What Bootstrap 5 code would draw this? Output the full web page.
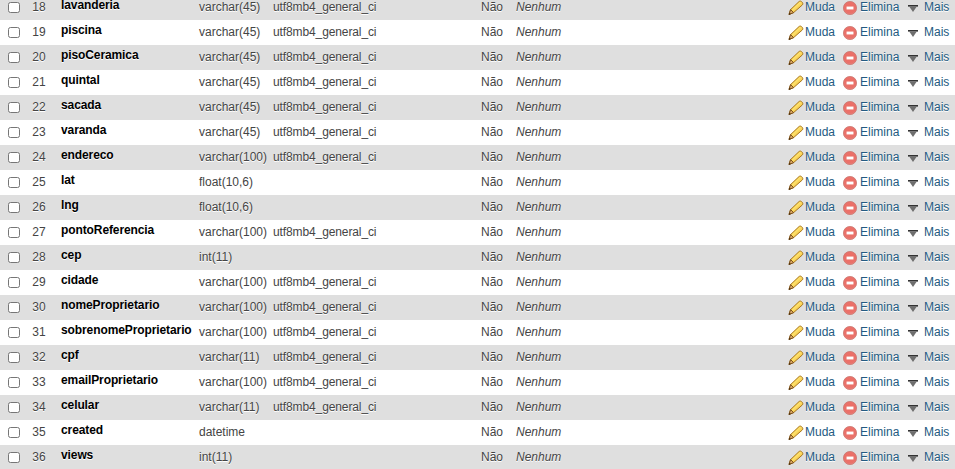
<!DOCTYPE html>
<html lang="pt">
<head>
<meta charset="utf-8">
<title>Estrutura</title>
<link rel="stylesheet" href="https://cdn.jsdelivr.net/npm/bootstrap@5.3.0/dist/css/bootstrap.min.css">
<style>
html,body{overflow:hidden;background:#fff}
body{font-family:"Liberation Sans",Arial,sans-serif;font-size:12px;color:#444;height:469px}
.struct-wrap{margin-top:-5px}
.struct-table{table-layout:fixed;width:955px;margin:0;border-collapse:collapse;--bs-table-color:#444;--bs-table-bg:transparent;color:#444}
.struct-table td{height:25px;padding:0;border:0;vertical-align:middle;white-space:nowrap;line-height:15px;text-shadow:0 1px 0 #fff}
.struct-table tr:nth-child(odd) td{background:#dfdfdf}
.struct-table tr:nth-child(even) td{background:#fff}
.struct-table tr>td.c-check{padding-left:8px}
.row-box{display:block;width:11.5px;height:11.5px;margin:0;border:1.5px solid #767676;border-radius:2.5px;background:#fff;appearance:none}
.c-num{text-align:center;padding-right:1px!important}
.c-name{padding-left:9px!important;font-weight:700;color:#000;letter-spacing:-.1px}
.c-name span{position:relative;top:-2px;display:block}
.struct-table td.c-name{color:#000}
.c-coll{letter-spacing:-.11px}
.c-def{font-style:italic}
.act{display:flex;align-items:center;color:#235a81;text-decoration:none}
.act svg{flex:none;display:block}
.act-change svg{margin:1px 1px 0 0}
.act-drop svg{margin:1px 3px 0 0}
.act-more svg{margin:1px 6px 0 0}
</style>
</head>
<body>
<svg width="0" height="0" class="d-block position-absolute">
<defs>
<linearGradient id="penBody" x1="0" y1="0" x2="1" y2="1"><stop offset="0" stop-color="#eda91f"/><stop offset=".45" stop-color="#ffe26a"/><stop offset="1" stop-color="#dd9212"/></linearGradient>
<radialGradient id="dropFill" cx=".5" cy=".45" r=".6"><stop offset="0" stop-color="#ee6f64"/><stop offset=".75" stop-color="#e9716a"/><stop offset="1" stop-color="#f0a098"/></radialGradient>
<symbol id="ic-pen" viewBox="0 0 16 16">
<path d="M11 1.6C11.8.9 12.8.9 13.6 1.7L14.3 2.4C15 3.2 15 4.2 14.3 5L5.6 12.6 1 14.5 2.6 9.6Z" fill="url(#penBody)" stroke="#a8761c" stroke-width="1" stroke-linejoin="round"/>
<path d="M2.6 9.6 5.6 12.6 1 14.5Z" fill="#d9a868" stroke="#744714" stroke-width=".9" stroke-linejoin="round"/>
<path d="M.8 14.7 1.5 12.7 2.8 14Z" fill="#3d2710"/>
</symbol>
<symbol id="ic-drop" viewBox="0.7 0.7 14.6 14.6">
<circle cx="8" cy="8" r="6.9" fill="url(#dropFill)" stroke="#c8736b" stroke-width=".8"/>
<rect x="4.4" y="6.5" width="7.2" height="3" fill="#fff"/>
</symbol>
<symbol id="ic-more" viewBox="0 0 10 7">
<rect x="0" y="0" width="10" height="1.6" fill="#333"/>
<path d="M1.2 1.6H8.8L5 7Z" fill="#6e6e6e"/>
</symbol>
</defs>
</svg>
<div class="struct-wrap">
<table class="table struct-table">
<colgroup><col style="width:27px"><col style="width:25px"><col style="width:147px"><col style="width:74px"><col style="width:208px"><col style="width:35px"><col style="width:272px"><col style="width:55px"><col style="width:65px"><col style="width:47px"></colgroup>
<tbody id="rows">
<tr><td class="c-check"><input class="row-box" type="checkbox"></td><td class="c-num">18</td><td class="c-name"><span>lavanderia</span></td><td>varchar(45)</td><td class="c-coll">utf8mb4_general_ci</td><td>Não</td><td class="c-def">Nenhum</td><td><a class="act act-change" href="#"><svg width="16" height="16"><use href="#ic-pen"/></svg>Muda</a></td><td><a class="act act-drop" href="#"><svg width="14" height="14"><use href="#ic-drop"/></svg>Elimina</a></td><td><a class="act act-more" href="#"><svg width="10" height="7"><use href="#ic-more"/></svg>Mais</a></td></tr>
<tr><td class="c-check"><input class="row-box" type="checkbox"></td><td class="c-num">19</td><td class="c-name"><span>piscina</span></td><td>varchar(45)</td><td class="c-coll">utf8mb4_general_ci</td><td>Não</td><td class="c-def">Nenhum</td><td><a class="act act-change" href="#"><svg width="16" height="16"><use href="#ic-pen"/></svg>Muda</a></td><td><a class="act act-drop" href="#"><svg width="14" height="14"><use href="#ic-drop"/></svg>Elimina</a></td><td><a class="act act-more" href="#"><svg width="10" height="7"><use href="#ic-more"/></svg>Mais</a></td></tr>
<tr><td class="c-check"><input class="row-box" type="checkbox"></td><td class="c-num">20</td><td class="c-name"><span>pisoCeramica</span></td><td>varchar(45)</td><td class="c-coll">utf8mb4_general_ci</td><td>Não</td><td class="c-def">Nenhum</td><td><a class="act act-change" href="#"><svg width="16" height="16"><use href="#ic-pen"/></svg>Muda</a></td><td><a class="act act-drop" href="#"><svg width="14" height="14"><use href="#ic-drop"/></svg>Elimina</a></td><td><a class="act act-more" href="#"><svg width="10" height="7"><use href="#ic-more"/></svg>Mais</a></td></tr>
<tr><td class="c-check"><input class="row-box" type="checkbox"></td><td class="c-num">21</td><td class="c-name"><span>quintal</span></td><td>varchar(45)</td><td class="c-coll">utf8mb4_general_ci</td><td>Não</td><td class="c-def">Nenhum</td><td><a class="act act-change" href="#"><svg width="16" height="16"><use href="#ic-pen"/></svg>Muda</a></td><td><a class="act act-drop" href="#"><svg width="14" height="14"><use href="#ic-drop"/></svg>Elimina</a></td><td><a class="act act-more" href="#"><svg width="10" height="7"><use href="#ic-more"/></svg>Mais</a></td></tr>
<tr><td class="c-check"><input class="row-box" type="checkbox"></td><td class="c-num">22</td><td class="c-name"><span>sacada</span></td><td>varchar(45)</td><td class="c-coll">utf8mb4_general_ci</td><td>Não</td><td class="c-def">Nenhum</td><td><a class="act act-change" href="#"><svg width="16" height="16"><use href="#ic-pen"/></svg>Muda</a></td><td><a class="act act-drop" href="#"><svg width="14" height="14"><use href="#ic-drop"/></svg>Elimina</a></td><td><a class="act act-more" href="#"><svg width="10" height="7"><use href="#ic-more"/></svg>Mais</a></td></tr>
<tr><td class="c-check"><input class="row-box" type="checkbox"></td><td class="c-num">23</td><td class="c-name"><span>varanda</span></td><td>varchar(45)</td><td class="c-coll">utf8mb4_general_ci</td><td>Não</td><td class="c-def">Nenhum</td><td><a class="act act-change" href="#"><svg width="16" height="16"><use href="#ic-pen"/></svg>Muda</a></td><td><a class="act act-drop" href="#"><svg width="14" height="14"><use href="#ic-drop"/></svg>Elimina</a></td><td><a class="act act-more" href="#"><svg width="10" height="7"><use href="#ic-more"/></svg>Mais</a></td></tr>
<tr><td class="c-check"><input class="row-box" type="checkbox"></td><td class="c-num">24</td><td class="c-name"><span>endereco</span></td><td>varchar(100)</td><td class="c-coll">utf8mb4_general_ci</td><td>Não</td><td class="c-def">Nenhum</td><td><a class="act act-change" href="#"><svg width="16" height="16"><use href="#ic-pen"/></svg>Muda</a></td><td><a class="act act-drop" href="#"><svg width="14" height="14"><use href="#ic-drop"/></svg>Elimina</a></td><td><a class="act act-more" href="#"><svg width="10" height="7"><use href="#ic-more"/></svg>Mais</a></td></tr>
<tr><td class="c-check"><input class="row-box" type="checkbox"></td><td class="c-num">25</td><td class="c-name"><span>lat</span></td><td>float(10,6)</td><td class="c-coll"></td><td>Não</td><td class="c-def">Nenhum</td><td><a class="act act-change" href="#"><svg width="16" height="16"><use href="#ic-pen"/></svg>Muda</a></td><td><a class="act act-drop" href="#"><svg width="14" height="14"><use href="#ic-drop"/></svg>Elimina</a></td><td><a class="act act-more" href="#"><svg width="10" height="7"><use href="#ic-more"/></svg>Mais</a></td></tr>
<tr><td class="c-check"><input class="row-box" type="checkbox"></td><td class="c-num">26</td><td class="c-name"><span>lng</span></td><td>float(10,6)</td><td class="c-coll"></td><td>Não</td><td class="c-def">Nenhum</td><td><a class="act act-change" href="#"><svg width="16" height="16"><use href="#ic-pen"/></svg>Muda</a></td><td><a class="act act-drop" href="#"><svg width="14" height="14"><use href="#ic-drop"/></svg>Elimina</a></td><td><a class="act act-more" href="#"><svg width="10" height="7"><use href="#ic-more"/></svg>Mais</a></td></tr>
<tr><td class="c-check"><input class="row-box" type="checkbox"></td><td class="c-num">27</td><td class="c-name"><span>pontoReferencia</span></td><td>varchar(100)</td><td class="c-coll">utf8mb4_general_ci</td><td>Não</td><td class="c-def">Nenhum</td><td><a class="act act-change" href="#"><svg width="16" height="16"><use href="#ic-pen"/></svg>Muda</a></td><td><a class="act act-drop" href="#"><svg width="14" height="14"><use href="#ic-drop"/></svg>Elimina</a></td><td><a class="act act-more" href="#"><svg width="10" height="7"><use href="#ic-more"/></svg>Mais</a></td></tr>
<tr><td class="c-check"><input class="row-box" type="checkbox"></td><td class="c-num">28</td><td class="c-name"><span>cep</span></td><td>int(11)</td><td class="c-coll"></td><td>Não</td><td class="c-def">Nenhum</td><td><a class="act act-change" href="#"><svg width="16" height="16"><use href="#ic-pen"/></svg>Muda</a></td><td><a class="act act-drop" href="#"><svg width="14" height="14"><use href="#ic-drop"/></svg>Elimina</a></td><td><a class="act act-more" href="#"><svg width="10" height="7"><use href="#ic-more"/></svg>Mais</a></td></tr>
<tr><td class="c-check"><input class="row-box" type="checkbox"></td><td class="c-num">29</td><td class="c-name"><span>cidade</span></td><td>varchar(100)</td><td class="c-coll">utf8mb4_general_ci</td><td>Não</td><td class="c-def">Nenhum</td><td><a class="act act-change" href="#"><svg width="16" height="16"><use href="#ic-pen"/></svg>Muda</a></td><td><a class="act act-drop" href="#"><svg width="14" height="14"><use href="#ic-drop"/></svg>Elimina</a></td><td><a class="act act-more" href="#"><svg width="10" height="7"><use href="#ic-more"/></svg>Mais</a></td></tr>
<tr><td class="c-check"><input class="row-box" type="checkbox"></td><td class="c-num">30</td><td class="c-name"><span>nomeProprietario</span></td><td>varchar(100)</td><td class="c-coll">utf8mb4_general_ci</td><td>Não</td><td class="c-def">Nenhum</td><td><a class="act act-change" href="#"><svg width="16" height="16"><use href="#ic-pen"/></svg>Muda</a></td><td><a class="act act-drop" href="#"><svg width="14" height="14"><use href="#ic-drop"/></svg>Elimina</a></td><td><a class="act act-more" href="#"><svg width="10" height="7"><use href="#ic-more"/></svg>Mais</a></td></tr>
<tr><td class="c-check"><input class="row-box" type="checkbox"></td><td class="c-num">31</td><td class="c-name"><span>sobrenomeProprietario</span></td><td>varchar(100)</td><td class="c-coll">utf8mb4_general_ci</td><td>Não</td><td class="c-def">Nenhum</td><td><a class="act act-change" href="#"><svg width="16" height="16"><use href="#ic-pen"/></svg>Muda</a></td><td><a class="act act-drop" href="#"><svg width="14" height="14"><use href="#ic-drop"/></svg>Elimina</a></td><td><a class="act act-more" href="#"><svg width="10" height="7"><use href="#ic-more"/></svg>Mais</a></td></tr>
<tr><td class="c-check"><input class="row-box" type="checkbox"></td><td class="c-num">32</td><td class="c-name"><span>cpf</span></td><td>varchar(11)</td><td class="c-coll">utf8mb4_general_ci</td><td>Não</td><td class="c-def">Nenhum</td><td><a class="act act-change" href="#"><svg width="16" height="16"><use href="#ic-pen"/></svg>Muda</a></td><td><a class="act act-drop" href="#"><svg width="14" height="14"><use href="#ic-drop"/></svg>Elimina</a></td><td><a class="act act-more" href="#"><svg width="10" height="7"><use href="#ic-more"/></svg>Mais</a></td></tr>
<tr><td class="c-check"><input class="row-box" type="checkbox"></td><td class="c-num">33</td><td class="c-name"><span>emailProprietario</span></td><td>varchar(100)</td><td class="c-coll">utf8mb4_general_ci</td><td>Não</td><td class="c-def">Nenhum</td><td><a class="act act-change" href="#"><svg width="16" height="16"><use href="#ic-pen"/></svg>Muda</a></td><td><a class="act act-drop" href="#"><svg width="14" height="14"><use href="#ic-drop"/></svg>Elimina</a></td><td><a class="act act-more" href="#"><svg width="10" height="7"><use href="#ic-more"/></svg>Mais</a></td></tr>
<tr><td class="c-check"><input class="row-box" type="checkbox"></td><td class="c-num">34</td><td class="c-name"><span>celular</span></td><td>varchar(11)</td><td class="c-coll">utf8mb4_general_ci</td><td>Não</td><td class="c-def">Nenhum</td><td><a class="act act-change" href="#"><svg width="16" height="16"><use href="#ic-pen"/></svg>Muda</a></td><td><a class="act act-drop" href="#"><svg width="14" height="14"><use href="#ic-drop"/></svg>Elimina</a></td><td><a class="act act-more" href="#"><svg width="10" height="7"><use href="#ic-more"/></svg>Mais</a></td></tr>
<tr><td class="c-check"><input class="row-box" type="checkbox"></td><td class="c-num">35</td><td class="c-name"><span>created</span></td><td>datetime</td><td class="c-coll"></td><td>Não</td><td class="c-def">Nenhum</td><td><a class="act act-change" href="#"><svg width="16" height="16"><use href="#ic-pen"/></svg>Muda</a></td><td><a class="act act-drop" href="#"><svg width="14" height="14"><use href="#ic-drop"/></svg>Elimina</a></td><td><a class="act act-more" href="#"><svg width="10" height="7"><use href="#ic-more"/></svg>Mais</a></td></tr>
<tr><td class="c-check"><input class="row-box" type="checkbox"></td><td class="c-num">36</td><td class="c-name"><span>views</span></td><td>int(11)</td><td class="c-coll"></td><td>Não</td><td class="c-def">Nenhum</td><td><a class="act act-change" href="#"><svg width="16" height="16"><use href="#ic-pen"/></svg>Muda</a></td><td><a class="act act-drop" href="#"><svg width="14" height="14"><use href="#ic-drop"/></svg>Elimina</a></td><td><a class="act act-more" href="#"><svg width="10" height="7"><use href="#ic-more"/></svg>Mais</a></td></tr>
</tbody>
</table>
</div>
</body>
</html>
